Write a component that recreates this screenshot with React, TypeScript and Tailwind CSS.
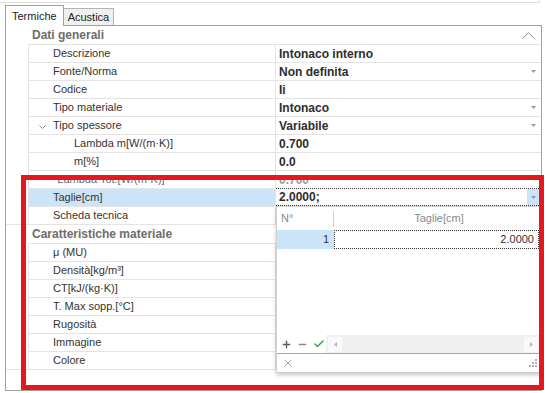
import { Plus, Minus, Check, X } from 'lucide-react'

const FONT = "font-['Liberation_Sans',Arial,sans-serif]"

type Row = {
  label: string
  value: string
  drop?: boolean
  indent?: boolean
  expander?: boolean
  muted?: boolean
  selected?: boolean
}

const GENERAL: Row[] = [
  { label: 'Descrizione', value: 'Intonaco interno' },
  { label: 'Fonte/Norma', value: 'Non definita', drop: true },
  { label: 'Codice', value: 'Ii' },
  { label: 'Tipo materiale', value: 'Intonaco', drop: true },
  { label: 'Tipo spessore', value: 'Variabile', drop: true, expander: true },
  { label: 'Lambda m[W/(m·K)]', value: '0.700', indent: true },
  { label: 'm[%]', value: '0.0', indent: true },
  { label: '*Lambda Tot.[W/(m·K)]', value: '0.700', muted: true },
  { label: 'Taglie[cm]', value: '2.0000;', selected: true },
  { label: 'Scheda tecnica', value: '' },
]

const MATERIAL: Row[] = [
  { label: 'μ (MU)', value: '' },
  { label: 'Densità[kg/m³]', value: '' },
  { label: 'CT[kJ/(kg·K)]', value: '' },
  { label: 'T. Max sopp.[°C]', value: '' },
  { label: 'Rugosità', value: '' },
  { label: 'Immagine', value: '' },
  { label: 'Colore', value: '' },
]

function DropArrow() {
  return (
    <svg width="5" height="3" viewBox="0 0 5 3" className="shrink-0">
      <path d="M0 0h5L2.5 3z" fill="#9a9a9a" />
    </svg>
  )
}

function Category({ title, chevron }: { title: string; chevron?: boolean }) {
  return (
    <div className="flex items-center h-[18px] pl-[26px] pr-[5px]">
      <span className="text-[12px] font-bold text-[#6f6c69]">{title}</span>
      {chevron && (
        <svg width="13" height="7" viewBox="0 0 13 7" className="ml-auto mr-[1px]">
          <path d="M0.5 6.5L6.5 0.8L12.5 6.5" fill="none" stroke="#8a8a8a" strokeWidth="1" />
        </svg>
      )}
    </div>
  )
}

function PropRow({ row }: { row: Row }) {
  return (
    <div className="flex h-[18px]">
      <div className="w-[22px] shrink-0" />
      <div
        className={`relative w-[248px] shrink-0 flex items-center border-t border-l border-r border-[#e4e4e4] ${
          row.indent ? 'pl-[45px]' : 'pl-[24px]'
        } ${row.selected ? 'bg-[#cce4f7]' : ''} ${row.muted ? 'text-[#6a6a6a]' : 'text-[#333]'}`}
      >
        {row.expander && (
          <svg width="7" height="4" viewBox="0 0 7 4" className="absolute left-[10px] top-[8px]">
            <path d="M0.5 0.5L3.5 3.5L6.5 0.5" fill="none" stroke="#8a8a8a" strokeWidth="1" />
          </svg>
        )}
        <span className="text-[11px] whitespace-nowrap">{row.label}</span>
      </div>
      {row.selected ? (
        <div className="-ml-px flex-1 flex items-center border border-dotted border-[#333] bg-white pl-[3px]">
          <span className="text-[12px] font-bold text-[#2d2d2d]">{row.value}</span>
          <div className="ml-auto h-full w-[13px] flex items-center justify-center bg-[#cce4f7]">
            <DropArrow />
          </div>
        </div>
      ) : (
        <div className="flex-1 flex items-center border-t border-[#e4e4e4] pl-[3px] pr-[5px]">
          <span className={`text-[12px] font-bold ${row.muted ? 'text-[#9a9a9a]' : 'text-[#2d2d2d]'}`}>
            {row.value}
          </span>
          {row.drop && <span className="ml-auto"><DropArrow /></span>}
        </div>
      )}
    </div>
  )
}

function Popup() {
  return (
    <div className="absolute left-[276px] top-[206px] w-[265px] h-[167px] flex flex-col bg-white border border-[#cfcfcf] shadow-[0_2px_4px_rgba(0,0,0,0.22)]">
      {/* header */}
      <div className="flex h-[23px] items-center text-[11px] text-[#8a8a8a]">
        <div className="w-[56px] pl-[4px]">N°</div>
        <div className="w-px h-[16px] bg-[#cfcfcf]" />
        <div className="flex-1 text-center pl-[4px]">Taglie[cm]</div>
      </div>
      {/* row */}
      <div className="flex h-[19px] text-[11px] text-[#333]">
        <div className="w-[57px] bg-[#cce4f7] flex items-center justify-end pr-[5px]">1</div>
        <div className="flex-1 flex items-center justify-end pr-[4px] border border-dotted border-[#333] mr-px">
          2.0000
        </div>
      </div>
      <div className="flex-1" />
      {/* toolbar */}
      <div className="flex h-[18px] items-center">
        <div className="flex items-center gap-[5px] pl-[4px] w-[49px]">
          <Plus size={11} strokeWidth={3} color="#5a5a5a" />
          <Minus size={11} strokeWidth={3} color="#8c8c8c" />
          <Check size={12} strokeWidth={3} color="#3a9d4a" />
        </div>
        <div className="flex-1 h-full flex items-center bg-[#f0f0f0] px-[2px]">
          <div className="w-[14px] h-[15px] bg-[#f9f9f9] flex items-center justify-center">
            <svg width="3" height="5" viewBox="0 0 3 5"><path d="M3 0v5L0 2.5z" fill="#b5b5b5" /></svg>
          </div>
          <div className="ml-auto w-[14px] h-[15px] bg-[#f9f9f9] flex items-center justify-center">
            <svg width="3" height="5" viewBox="0 0 3 5"><path d="M0 0v5L3 2.5z" fill="#b5b5b5" /></svg>
          </div>
        </div>
      </div>
      {/* footer */}
      <div className="flex h-[19px] items-center border-t border-[#a8a8a8] pl-[5px] pr-[3px]">
        <X size={12} strokeWidth={1.3} color="#7a7a7a" />
        <svg width="8" height="8" viewBox="0 0 8 8" className="ml-auto">
          {[
            [6, 0], [3, 3], [6, 3], [0, 6], [3, 6], [6, 6],
          ].map(([x, y]) => (
            <rect key={`${x}-${y}`} x={x} y={y} width="2" height="2" fill="#b0b0b0" />
          ))}
        </svg>
      </div>
    </div>
  )
}

export default function App() {
  return (
    <div className={`relative w-[547px] h-[393px] overflow-hidden bg-white ${FONT}`}>
      {/* edge of the element above */}
      <div className="w-[540px] h-[3px] border-b border-r border-[#dcdcdc]" />

      {/* tabs */}
      <div className="flex items-end h-[22px] pl-[5px]">
        <div className="relative z-10 h-[21px] -mb-px px-[6px] flex items-center border border-b-0 border-[#a0a0a0] bg-white text-[11px] text-[#222]">
          Termiche
        </div>
        <div className="h-[17px] px-[4px] flex items-center border-t border-r border-[#b5b5b5] bg-[#f0f0f0] text-[11px] text-[#222]">
          Acustica
        </div>
      </div>

      {/* property grid panel */}
      <div className="ml-[5px] w-[537px] h-[366px] border border-[#a0a0a0] flex flex-col">
        <Category title="Dati generali" chevron />
        {GENERAL.map((r) => (
          <PropRow key={r.label} row={r} />
        ))}
        <div className="border-t border-[#e4e4e4]">
          <Category title="Caratteristiche materiale" />
        </div>
        {MATERIAL.map((r) => (
          <PropRow key={r.label} row={r} />
        ))}
        <div className="border-t border-[#e4e4e4]" />
      </div>

      <Popup />

      {/* red annotation frame */}
      <div className="absolute left-[21px] top-[175px] w-[523px] h-[215px] border-[5px] border-[#e5171f]" />
    </div>
  )
}
